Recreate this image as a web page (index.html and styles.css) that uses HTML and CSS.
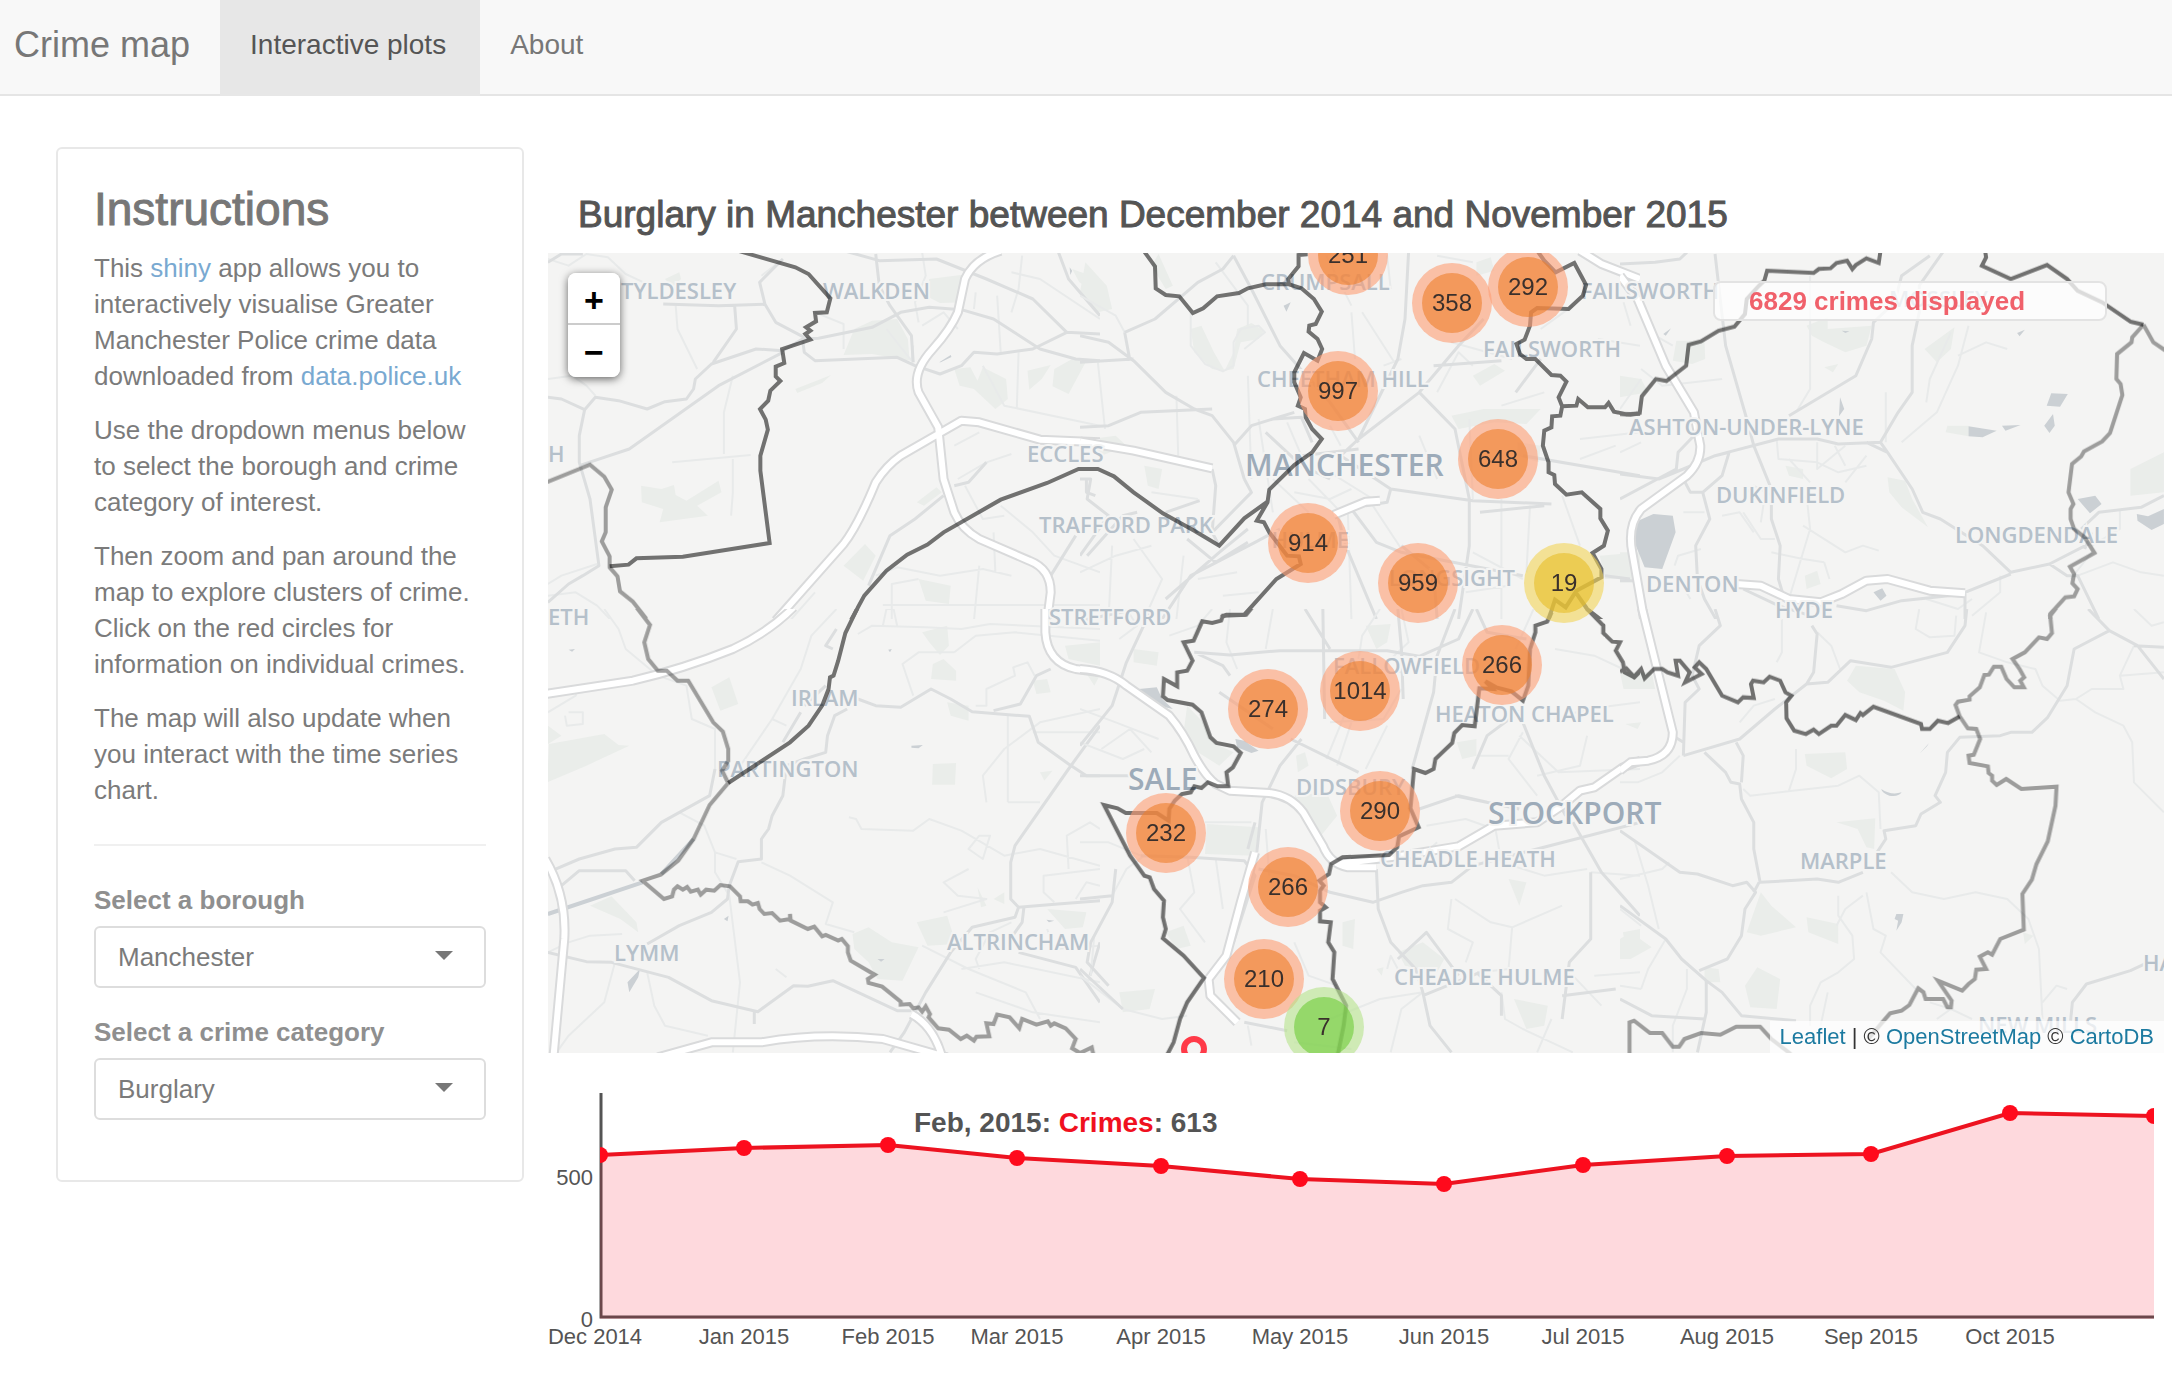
FILE: index.html
```html
<!DOCTYPE html>
<html lang="en">
<head>
<meta charset="utf-8">
<meta name="viewport" content="width=device-width, initial-scale=1">
<title>Crime map</title>
<link rel="stylesheet" href="styles.css">
</head>
<body>
<nav class="navbar">
  <a class="brand" href="#">Crime map</a>
  <a class="nav-item active" href="#plots">Interactive plots</a>
  <a class="nav-item" href="#about">About</a>
</nav>
<main class="layout">
  <aside class="sidebar">
    <h3>Instructions</h3>
    <p>This <a href="#shiny">shiny</a> app allows you to interactively visualise Greater Manchester Police crime data downloaded from <a href="#data">data.police.uk</a></p>
    <p>Use the dropdown menus below to select the borough and crime category of interest.</p>
    <p>Then zoom and pan around the map to explore clusters of crime. Click on the red circles for information on individual crimes.</p>
    <p>The map will also update when you interact with the time series chart.</p>
    <hr>
    <div class="field">
      <label for="borough">Select a borough</label>
      <div class="select-wrap"><select id="borough"><option>Manchester</option></select></div>
    </div>
    <div class="field">
      <label for="category">Select a crime category</label>
      <div class="select-wrap"><select id="category"><option>Burglary</option></select></div>
    </div>
  </aside>
  <section class="content">
    <h4>Burglary in Manchester between December 2014 and November 2015</h4>
    <div class="map">
      <svg class="basemap" viewBox="548 254 1616 800" preserveAspectRatio="xMidYMid slice" aria-label="Map of Greater Manchester">
        <!-- parks and water -->
        <svg class="tile" x="540" y="180" width="560" height="440" viewBox="0 0 1568 1320" preserveAspectRatio="none">
          <path class="park" d="M283 920L340 930 375 918 380 948 410 965 500 905 508 940 440 980 470 1010 335 1030 345 990 285 970ZM880 450L930 425 1000 420 1030 480 1035 545 930 525 850 528ZM1090 300L1200 285 1190 370 1120 372 1080 350ZM1160 570L1205 565 1225 605 1240 565 1305 600 1310 660 1275 690 1215 630 1175 620ZM1365 575L1430 558 1405 600 1370 632ZM1440 570L1490 540 1530 545 1480 645 1435 622ZM1060 1200L1150 1220 1145 1275 1080 1265ZM850 1160L910 1095 940 1130 905 1205ZM1055 970L1110 925 1125 940 1075 980ZM1490 270L1568 300 1568 350 1510 310ZM715 630L815 588 790 612 720 642ZM350 300L390 280 395 300 370 325Z"/>
          <path class="water" d="M1483 265L1490 275 1485 288ZM1118 550L1150 528 1152 534 1122 550Z"/>
        </svg>
        <svg class="tile" x="1080" y="180" width="560" height="440" viewBox="0 0 1568 1320" preserveAspectRatio="none">
          <path class="park" d="M310 450L340 440 375 520 405 575 370 570 320 520ZM440 450L480 432 515 455 500 480 450 490 430 570 405 575 430 520ZM15 250L75 320 90 390 50 400 0 340ZM1040 710L1130 690 1290 690 1250 735 1160 730 1060 750ZM1100 590L1160 555 1190 575 1120 620ZM1225 790L1290 800 1285 850 1225 830ZM1455 1130L1568 1120 1568 1200 1470 1200ZM220 225L260 320 240 330 200 260ZM30 780L100 770 130 800 60 830ZM180 860L230 870 220 930 190 920ZM1110 250L1150 235 1160 275 1110 290Z"/>
          <path class="water" d="M570 380L590 370 578 398ZM1555 1060L1568 1050V1110Z"/>
        </svg>
        <svg class="tile" x="1620" y="180" width="552" height="440" viewBox="0 0 1568 1320" preserveAspectRatio="none">
          <path class="park" d="M160 485L240 485 242 540 205 555 150 545ZM530 440L590 415 590 450 715 440 700 500 640 520 580 490 545 470ZM865 510L950 445 940 510 900 550ZM0 590L60 600 80 640 0 655ZM760 895L810 905 830 960 875 1045 800 985 765 940ZM1450 870L1545 820 1545 940 1450 950ZM470 860L520 870 520 900 480 890ZM525 1190L560 1175 570 1215 530 1230ZM580 565L620 555 605 580ZM930 740L990 740 990 772 925 760ZM0 1120L40 1120 50 1210 0 1210Z"/>
          <path class="water" d="M42 1030L95 1005 150 1010 158 1060 120 1170 70 1165 45 1100ZM1225 643L1272 645 1250 683 1212 680ZM990 742L1070 755 1030 775 990 772ZM1085 740L1138 738 1095 755ZM1230 705L1235 740 1220 762 1205 740ZM1300 960L1350 950 1368 975 1335 1003ZM1468 1005L1500 1012 1545 990 1545 1035 1510 1053 1470 1025ZM720 1240L745 1228 757 1250 740 1265ZM625 655L637 690 622 712ZM1128 462L1150 452 1135 472ZM630 455L652 457 640 462ZM123 465L145 448 130 470Z"/>
        </svg>
        <svg class="tile" x="540" y="610" width="560" height="450" viewBox="0 0 1568 1350" preserveAspectRatio="none">
          <path class="park" d="M25 405L180 375 220 408 250 410 130 470 20 520ZM22 350L60 380 22 405ZM480 235L530 205 555 285 505 305ZM1070 70L1140 50 1145 110 1120 138 1090 100ZM1100 165L1130 150 1165 185 1165 215 1095 210ZM1380 215L1420 210 1430 250 1390 255ZM1470 110L1568 100V170L1480 150ZM1100 465L1165 462 1162 527 1098 527ZM1055 940L1140 920 1165 1005 1085 1010ZM875 975L920 955 985 1000 1060 1015 1015 1115 945 1110 920 1060 880 1020ZM140 890L200 862 270 940 275 970 225 930ZM1420 900L1530 910 1520 955 1470 960ZM1225 835L1250 890 1235 895ZM1270 870L1300 850 1300 885ZM1140 280L1200 290 1200 335 1150 320ZM1400 490L1435 485 1412 515Z"/>
          <path class="water" d="M1040 410L1072 408 1060 418 1040 416ZM80 122L98 120 90 128ZM515 930L528 920 525 937ZM245 1120L280 1080 275 1105 250 1150ZM1418 932L1440 935 1425 940ZM945 1050L965 1050 955 1058ZM975 122L985 120 980 130Z"/>
        </svg>
        <svg class="tile" x="1080" y="610" width="560" height="450" viewBox="0 0 1568 1350" preserveAspectRatio="none">
          <path class="park" d="M355 645L500 655 490 740 350 735ZM300 290L345 340 370 400 430 430 390 470 330 430 290 370ZM600 560L690 550 720 620 660 700 620 600ZM110 1150L210 1140 195 1200 120 1210ZM890 1030L960 1000 1020 1050 1000 1090 910 1070ZM1215 1170L1310 1190 1300 1250 1250 1260ZM735 940L770 930 765 1020 735 1010ZM1200 810L1250 820 1230 890ZM605 440L630 430 640 470 610 490ZM1055 400L1110 390 1110 440 1070 450ZM240 970L290 950 310 1010 270 1020ZM800 50L870 45 860 100 830 120ZM1520 970L1568 960V1030L1530 1020ZM150 120L220 130 215 170 150 160ZM10 180L60 190 40 230ZM1210 1240L1225 1260ZM830 1080L850 1075 845 1100Z"/>
          <path class="water" d="M165 240L215 235 230 270 260 300 220 290 180 270ZM435 390L460 395 500 425 480 432 440 415Z"/>
        </svg>
        <svg class="tile" x="1620" y="610" width="552" height="450" viewBox="0 0 1568 1350" preserveAspectRatio="none">
          <path class="park" d="M670 170L780 180 810 250 805 305 750 275 680 250 645 215ZM525 435L640 430 645 480 600 508 530 470ZM615 640L725 628 722 720 700 715 675 660ZM400 850L430 890 500 955 400 980 360 970ZM530 925L620 945 620 1005 535 970ZM390 1075L455 1110 445 1200 370 1195 355 1130ZM0 990L30 970 90 1015 30 1050 0 1050ZM0 190L90 190 100 240 10 240ZM240 1075L280 1080 285 1120 240 1120ZM1145 970L1175 980 1150 1005ZM15 345L60 340 50 360Z"/>
          <path class="water" d="M742 540Q770 560 800 550 790 565 765 560 745 552 742 540ZM785 915L805 915 800 940 785 965 790 935 780 930ZM850 435L878 402 872 412Z"/>
        </svg>
        <!-- roads, rivers -->
        <svg class="tile" x="540" y="180" width="560" height="440" viewBox="0 0 1568 1320" preserveAspectRatio="none">
          <path class="minor" d="M22 240L80 260 130 225 190 235 240 285 290 310M22 600L90 590 130 620 155 650M22 1250L100 1240 160 1280 200 1325M380 380L385 450 440 570M540 590L515 700 515 825M370 850L590 828M540 840L540 940 535 1010M1070 220L1080 290 1050 370 1060 430M1070 440L1130 400 1170 450M1220 340L1215 390M1280 350L1290 520M1340 520L1335 690M1240 560L1300 680 1568 740M1160 800L1230 760M1170 900L1250 850 1320 825M940 1190L1000 1165 1120 1190 1240 1170 1320 1190M985 1325L985 1215 1060 1200M1230 1160L1215 1325M1270 1060L1275 1180M1290 980L1380 1060 1440 1130 1568 1180M1190 920L1240 1020 1300 1010M22 1215L60 1190 160 1155M770 400L850 435 850 510M970 450L1040 545 1045 500M1320 280L1400 300 1568 420M620 290L680 240M700 1325L770 1240M960 1278L1568 1278M1350 230L1340 330 1320 400"/>
          <path class="road" d="M22 655L60 660 125 692 155 655 220 665 300 690 350 668 410 660 430 630 435 600 480 555 605 510 680 515 735 480 780 478 930 445 1010 400 1090 385 1180 392 1270 420 1400 510 1500 540 1568 545M125 692L110 770 110 850 140 960 165 1160 120 1190 80 1215 22 1270M110 860L250 810 500 620 680 520M345 375L500 380 630 376 660 430 740 475M630 376L615 310 680 240M545 380L550 450 485 550M735 480L740 520 770 545 1000 535 1050 560 1120 585 1180 560 1215 520 1280 525 1380 510 1475 460 1568 465M940 225L950 320 980 380 1040 470 1045 550M850 215L950 245 1110 240 1250 300 1380 360 1475 460M1450 215L1480 300 1568 410M1160 920L1200 910 1250 850M920 1220L980 1070 1050 1020 1130 950M1430 1190L1500 1070M1530 900L1530 940 1555 950M22 250L60 225 120 225"/>
          <path class="mway-case" d="M1290 215Q1215 240 1190 300L1170 400Q1150 450 1100 510Q1040 580 1060 640L1115 745 1130 900 1160 1000Q1180 1050 1230 1080L1370 1145Q1430 1170 1430 1240L1420 1325M660 1325L850 1095Q890 1040 940 910Q970 860 1010 830L1115 765 1180 725 1230 730 1400 782 1570 790"/>
          <path class="mway" d="M1290 215Q1215 240 1190 300L1170 400Q1150 450 1100 510Q1040 580 1060 640L1115 745 1130 900 1160 1000Q1180 1050 1230 1080L1370 1145Q1430 1170 1430 1240L1420 1325M660 1325L850 1095Q890 1040 940 910Q970 860 1010 830L1115 765 1180 725 1230 730 1400 782 1570 790"/>
        </svg>
        <svg class="tile" x="1080" y="180" width="560" height="440" viewBox="0 0 1568 1320" preserveAspectRatio="none">
          <path class="minor" d="M0 350L100 410 125 460M310 400L310 500 350 555 400 577 430 560 430 490 450 450 500 440 518 460 460 510M50 550L70 750M270 650L275 830M470 590L480 900M380 250L470 380 470 440M760 400L770 540M790 400L880 550M850 560L900 540M1000 640L1060 520 1100 560M1040 490L1210 540M1290 450L1380 380M1180 680L1300 640M950 770L1000 900M1090 720L1100 960M1180 960L1180 1320M1260 980L1250 1180M1350 950L1400 1100M750 1000L760 1320M820 980L900 1110M600 940L700 960 760 930M640 900L740 1010M700 880L820 960M540 900L640 1000M500 720L540 1000M580 730L620 830M700 740L730 800M90 1100L80 1320M150 1080L230 1200 180 1320M290 1130L270 1320M330 1200L440 1180M0 1180L100 1130 200 1100M200 940L330 960M1100 1120L1240 1200M1080 1240L1200 1220M1400 780L1568 760M1400 840L1500 800M1450 480L1568 500M860 230L870 330M1000 230L1100 250M690 230L760 380M400 1250L500 1240"/>
          <path class="road" d="M0 470L80 490 150 545 240 640 320 690 370 710 430 790 460 900M0 550L150 540M125 460L140 545M125 460L210 420 330 310 400 270 430 230M430 230L480 330 560 500 700 670 780 790M920 220L910 420 890 540 780 780 730 830M1130 420L1060 500 950 640 780 780M950 640L1050 750 1090 960 1090 1100 1060 1320M730 830L870 930 1100 965 1320 975M870 930L860 970 800 980M0 745L80 740 170 700 370 690M460 900L480 940 370 1060 390 1100M0 900L30 900 20 960 80 1010 0 1130M370 870L380 920 370 1060M20 1130L120 1010 160 1000M240 1000L335 965M230 1320L310 1190 490 1090 560 1050M240 1260L390 1120 470 1050M760 990L830 1090 900 1120 1240 1190M720 1000L740 1090 830 1320M1240 830L1568 890M990 560L1180 545M1290 540L1220 640M900 1100L990 1180 1000 1320M620 830L780 810M520 760L620 860 700 900M540 720L620 715 650 790M1120 1000L1300 980M1540 1200L1470 1190M1410 220L1568 320M300 1080L380 1150 470 1090M600 700L480 740 430 800"/>
          <path class="mway-case" d="M0 787L150 815 370 868M710 1008L800 968 840 965M1400 215L1460 255 1568 300"/>
          <path class="mway" d="M0 787L150 815 370 868M710 1008L800 968 840 965M1400 215L1460 255 1568 300"/>
        </svg>
        <svg class="tile" x="1620" y="180" width="552" height="440" viewBox="0 0 1568 1320" preserveAspectRatio="none">
          <path class="minor" d="M70 380L100 470 150 500M60 570L120 620 290 600M540 290L540 630 500 700M755 640L755 790M960 530L1040 490 1100 510M990 440L960 560 900 700 800 790M940 460L880 600 870 670M445 780L450 840 560 850 620 880 700 860M560 790L560 870 640 800M610 800L640 860M350 950L380 920 450 960 560 950M350 1000L400 1080 440 1080M430 1120L520 1140 580 1150M520 1040L640 1120 690 1100 735 1115M410 960L400 1030M580 1150L595 1200M155 1160L165 1130 230 1110M290 1010L340 1000 380 1060M530 950L540 1050 480 1260M160 1190L200 1260M870 1260L960 1290 1000 1260M1300 1190L1400 1150 1480 1180 1545 1190M1080 1190L1080 1240 1000 1310M1340 1120L1280 1200M10 370L30 440M60 600L0 690M180 1000L240 1000M480 840L540 910M700 830L640 910M0 820L60 790M1420 990L1420 1050 1340 1100"/>
          <path class="road" d="M0 255L100 250 170 240 190 220M270 225L300 500 360 720 380 800 430 930 430 1020 455 1100 450 1200 470 1270M0 885L110 900 180 870 270 830 450 780 560 780 620 795 740 790 790 700 830 640 830 500 850 400 850 320 920 215M480 710L670 590 715 480 720 430 780 370 800 290 880 230M0 960L160 870 165 820 210 770 230 820M270 830L310 820 290 890 235 940 200 940 180 900M235 940L255 1020 215 1100 220 1200 240 1260 275 1325M700 790L760 820 830 930 860 1000 910 1020 1030 1100 1110 1180 1220 1155 1340 1090M1110 1185L980 1240 980 1320M1220 1155L1270 1190 1300 1190 1360 1320M1310 1050L1360 1000 1480 985 1545 950M615 1280L700 1295 800 1265 980 1245M740 790L760 820M0 1205L40 1205M1340 1060L1320 1110M350 1230L450 1280 540 1310"/>
          <path class="mway-case" d="M0 290L50 360 130 560 210 700 228 800Q230 850 190 890L60 990Q20 1040 35 1120L70 1330M330 1215L400 1220 480 1260 570 1270 630 1245 700 1205 760 1200 880 1235 980 1243"/>
          <path class="mway" d="M0 290L50 360 130 560 210 700 228 800Q230 850 190 890L60 990Q20 1040 35 1120L70 1330M330 1215L400 1220 480 1260 570 1270 630 1245 700 1205 760 1200 880 1235 980 1243"/>
        </svg>
        <svg class="tile" x="540" y="610" width="560" height="450" viewBox="0 0 1568 1350" preserveAspectRatio="none">
          <path class="minor" d="M180 0L220 60 240 120 330 200 410 230 425 330 490 360 490 480M830 0L760 80 730 180 650 330 580 440 530 520M650 330L690 350M890 75L930 50 1080 55 1180 60 1260 45 1568 60M960 50L970 0 990 0 1000 50M1160 130L1060 130 1015 165 1045 260M1160 130L1220 80 1330 70 1568 95M1220 290L1250 290 1250 240 1330 200 1325 175 1365 160 1385 200M865 625L885 630 900 660 1045 665 1090 630 1180 665 1300 740 1400 720 1568 770M1310 320L1310 580M1250 580L1240 500 1300 420 1400 340 1568 300M1310 580L1400 580M1380 370L1568 370M1230 680L1200 720 1240 750 1260 680ZM1200 780L1130 820 1170 860 1250 870 1130 910M1480 780L1475 680 1540 640 1568 660M620 760L700 800 820 880 800 945 880 970M390 610L460 650 490 730 550 750M490 730L490 790 530 860 560 1120 540 1330M300 1090L320 1190 350 1250 470 1280M210 1060L180 1180 80 1280 40 1340M22 1030L80 1000 140 980 230 975M1070 1010L1200 1080 1360 1150 1400 1230M1230 1080L1220 1050 1260 970 1320 940M1180 1080L1300 1060 1568 1120M1220 1150L1380 1210 1568 1240M22 310L100 260 105 240M80 310L120 310 120 345 75 350 70 320M660 1080L690 1105M1440 880L1410 850 1410 800 1568 780M1500 870L1530 820 1568 830M1420 960L1440 1020 1568 1010"/>
          <path class="road" d="M890 270L940 290 1010 295 1095 240 1150 270 1210 308 1370 322 1395 400 1480 465 1530 500 1568 500M1270 305L1345 285 1390 200 1430 180M1568 350L1480 480 1330 710 1318 760 1318 870 1340 895 1450 885 1568 875M1340 895L1330 925 1210 955 1150 1030 1080 1150 1020 1270 980 1330M1355 895L1350 940 1320 985M1340 1030L1500 1075 1568 1180M1568 1000L1540 1100M860 300L825 320 805 380 800 430 740 450 690 470 680 560 650 620 640 660 620 690 620 750 555 758 530 830 525 870 480 910 390 950 300 1005M490 480L475 560 340 640 270 715 210 720 110 750 22 790M60 830L110 785 240 785 265 815M22 1030L130 1058 200 1060 360 1105 480 1175 610 1208 710 1130 750 1132 820 1115 1000 1205 1040 1205M730 310L680 400M830 60L800 110 820 120M800 230L740 290M600 1205L600 1245"/>
          <path class="river" d="M22 915L287 820M340 795L430 690"/>
          <path class="mway-case" d="M710 -5Q640 70 540 120Q400 180 260 215L15 255M15 750Q75 860 68 990L38 1340M330 1345L480 1300 620 1300Q780 1270 960 1290L1140 1345M1040 1215Q1100 1250 1125 1340M1415 -5L1415 70Q1420 160 1500 180L1570 190"/>
          <path class="mway" d="M710 -5Q640 70 540 120Q400 180 260 215L15 255M15 750Q75 860 68 990L38 1340M330 1345L480 1300 620 1300Q780 1270 960 1290L1140 1345M1040 1215Q1100 1250 1125 1340M1415 -5L1415 70Q1420 160 1500 180L1570 190"/>
        </svg>
        <svg class="tile" x="1080" y="610" width="560" height="450" viewBox="0 0 1568 1350" preserveAspectRatio="none">
          <path class="minor" d="M0 300L100 340 220 390M60 420L140 360 200 430M0 400L120 450 180 420M420 0L410 100 440 180M540 0L520 120M840 0L790 80 780 150M790 190L820 180 900 190M700 340L850 330 900 240M740 320L690 450M760 340L720 470M860 350L800 480M480 640L350 640M300 740L320 850 280 900 350 1000M520 660L530 800M380 750L400 900M90 860L130 780 180 740M0 1100L120 1200 230 1230 300 1220M40 980L30 1100M600 1000L640 1100 720 1130M1040 870L1030 960 1100 1000 1080 1060M1050 870L1150 940 1210 955 1350 890M1210 955L1200 1080 1120 1090M1160 640L1180 760 1300 800 1420 780M970 650L1080 630 1160 660M940 760L1000 700M1430 790L1568 800M1240 370L1200 450 1280 560M1420 380L1400 470 1280 500M1120 440L1200 440M960 1150L900 1200 870 1330M1180 1150L1190 1230 1240 1260 1380 1330M1320 1230L1280 1330M1440 1100L1568 1090M1380 1100L1460 1190M860 1080L870 1040 890 1080M700 1230L840 1170 960 1150M470 1250L480 1310M600 1300L760 1320M370 0L330 50 250 80M130 0L160 50 110 90M900 0L920 100 870 150M1270 0L1220 120M1330 330L1420 300 1568 280M1330 120L1440 140 1520 180M1230 380L1340 490 1568 480M0 700L80 700 170 740"/>
          <path class="road" d="M0 35L160 0M200 0L130 160 90 290 0 410M680 0L685 330M890 0L900 120 905 270M320 130L420 138 560 125 860 125 950 142 1060 90 1100 0M1050 0L1000 140 990 250 930 480M330 135L400 170 420 200M590 390L780 490M620 390L560 470 510 580 495 730M0 500L140 500M170 740L310 745 460 755 490 800 430 1000 370 1100M500 780L600 800 700 850 820 880 900 850 960 830 1040 820 1100 770 1568 640M830 780L835 900 870 1000 940 1080 960 1150 980 1250 1040 1330M1240 340L1300 500 1360 620M950 600L1060 560 1140 580M1100 480L1140 380 1240 300M1430 790L1430 990 1370 1060 1350 1230M1380 640L1460 790 1568 920M1110 1090L1180 1160 1180 1220M960 1160L1120 1090M890 1050L970 970 1060 1100M470 720L490 640M100 780L90 880 30 1000 20 1060 80 1130M0 870L90 860M1110 0L1140 70 1250 90M630 0L700 120M0 1080L120 1200M460 1240L580 1265M1050 560L1230 600M1500 1140L1350 1160M390 250L540 360"/>
          <path class="mway-case" d="M0 180Q80 185 130 230L250 320Q290 370 320 440Q350 500 380 525L420 545 530 552Q590 560 625 610L680 710Q700 765 750 775L830 775M490 730L450 880 410 1040 360 1110 365 1160 440 1240M720 765L900 740 1060 712 1160 650 1280 640 1350 590 1400 545 1440 535 1520 475 1570 455"/>
          <path class="mway" d="M0 180Q80 185 130 230L250 320Q290 370 320 440Q350 500 380 525L420 545 530 552Q590 560 625 610L680 710Q700 765 750 775L830 775M490 730L450 880 410 1040 360 1110 365 1160 440 1240M720 765L900 740 1060 712 1160 650 1280 640 1350 590 1400 545 1440 535 1520 475 1570 455"/>
        </svg>
        <svg class="tile" x="1620" y="610" width="552" height="450" viewBox="0 0 1568 1350" preserveAspectRatio="none">
          <path class="minor" d="M460 30L460 130 445 160M560 70L600 110 625 180M850 0L840 60 880 85 950 80 955 20M1040 10L1020 130 1100 160 1180 180 1200 230 1250 275 1295 270 1350 310 1430 350 1455 400 1460 520 1545 610M1295 270L1340 240 1430 240 1420 200 1460 110M1460 0L1510 50 1545 40M350 540L370 560 490 545 620 530 680 500 735 550 740 660M500 420L500 480 480 545M340 340L380 290 440 270M770 790L830 850 920 870 1010 850 1100 870 1160 930 1190 1020 1200 1230M700 850L720 960 755 980 740 1030 840 1140M620 860L620 920 660 980 665 1050 620 1090 570 1120 540 1190 540 1250M590 1150L570 1250M0 520L50 520 120 490 170 440M40 690L80 830 110 960M0 810L120 780 140 760M0 900L60 950M130 990L80 1080 60 1140M190 1080L190 1140 150 1250 150 1330M1200 1180L1240 1130 1270 1140M900 1230L940 1200 1000 1230M0 1130L60 1140M690 860L640 900 615 950M1420 200L1545 190M880 1180L940 1200"/>
          <path class="road" d="M270 0L285 50 225 110 205 200 225 240 185 280 180 440M545 50L560 75 550 190 530 225 590 220 655 155 770 175 930 130 980 50 985 0M530 225L440 300 340 390 180 440M240 430L300 490 315 520 340 525 345 570 380 640 380 720 398 820 560 810 620 820 690 790M330 400L350 440 345 520M0 665L170 790 220 795 320 830 360 820 385 850 355 900 345 980 305 1050 225 1085M0 890L130 990 175 1050 245 1115 290 1150 345 1220 500 1235M245 1115L245 1210 220 1330M0 1170L90 1220 240 1230M730 730L755 690 750 665 840 650 855 615 910 580 895 560 925 490 930 430 965 385 1080 380 1110 370 1170 370 1215 325 1270 230 1290 120 1390 65 1330 0M1390 65L1470 110 1545 210M1460 110L1545 115M1280 1235L1285 1180 1325 1125 1450 1085 1500 1060M395 820L380 850M150 380L180 400"/>
          <path class="mway-case" d="M62 -5L150 370Q150 440 80 455L30 460 0 485"/>
          <path class="mway" d="M62 -5L150 370Q150 440 80 455L30 460 0 485"/>
        </svg>
        <!-- place names -->
        <g class="places">
          <text x="621" y="300">TYLDESLEY</text>
          <text x="823" y="300">WALKDEN</text>
          <text x="548" y="463">H</text>
          <text x="1027" y="463">ECCLES</text>
          <text x="1039" y="534">TRAFFORD PARK</text>
          <text x="1049" y="626">STRETFORD</text>
          <text x="1261" y="291">CRUMPSALL</text>
          <text x="1719" y="300" class="end">FAILSWORTH</text>
          <text x="1483" y="358">FAILSWORTH</text>
          <text x="1257" y="388">CHEETHAM HILL</text>
          <text x="1349" y="549" class="end">HULME</text>
          <text x="1515" y="587" class="end">LONGSIGHT</text>
          <text x="1629" y="436">ASHTON-UNDER-LYNE</text>
          <text x="1716" y="504">DUKINFIELD</text>
          <text x="1955" y="544">LONGDENDALE</text>
          <text x="1646" y="593">DENTON</text>
          <text x="1775" y="619">HYDE</text>
          <text x="1889" y="308">MOSSLEY</text>
          <text x="548" y="626">ETH</text>
          <text x="791" y="707">IRLAM</text>
          <text x="717" y="778">PARTINGTON</text>
          <text x="614" y="962">LYMM</text>
          <text x="947" y="951">ALTRINCHAM</text>
          <text x="1333" y="675">FALLOWFIELD</text>
          <text x="1435" y="723">HEATON CHAPEL</text>
          <text x="1296" y="796">DIDSBURY</text>
          <text x="1380" y="868">CHEADLE HEATH</text>
          <text x="1394" y="986">CHEADLE HULME</text>
          <text x="1800" y="870">MARPLE</text>
          <text x="2143" y="972">HAYFIELD</text>
          <text x="1978" y="1034">NEW MILLS</text>
          <text class="city" x="1245" y="477">MANCHESTER</text>
          <text class="city" x="1128" y="791">SALE</text>
          <text class="city" x="1488" y="825">STOCKPORT</text>
        </g>
        <!-- county boundary -->
        <g class="boundary outer">
          <svg class="tile" x="540" y="180" width="560" height="440" viewBox="0 0 1568 1320" preserveAspectRatio="none">
            <path d="M18 910L140 857 180 893 201 932 184 985 184 1060 173 1087 195 1132 195 1165 217 1192 224 1237 260 1268 298 1320"/>
          </svg>
          <svg class="tile" x="1620" y="180" width="552" height="440" viewBox="0 0 1568 1320" preserveAspectRatio="none">
            <path d="M1487 437L1515 490 1550 515M1487 437L1455 475 1453 490 1412 525 1410 600 1422 615 1427 648 1392 762 1370 787 1318 817 1310 832 1284 855 1274 940 1288 975 1280 990 1280 1020 1290 1050 1320 1075 1348 1122 1278 1163 1290 1185 1285 1213 1300 1230 1290 1252 1265 1255 1222 1305 1222 1325"/>
          </svg>
          <svg class="tile" x="540" y="610" width="560" height="450" viewBox="0 0 1568 1350" preserveAspectRatio="none">
            <path d="M270 -5L308 48 292 100 303 150 330 185 355 185 385 215 415 215 485 340 512 368 527 420 527 455 510 485 527 522 475 588 430 690 387 755 338 797 287 815 347 870 370 862 375 842 385 832 400 842 412 834 422 848 442 842 450 857 465 842 488 845 505 828 532 832 560 862 562 877 582 877 595 887 610 882 615 900 628 915 650 912 672 935 700 930 700 915 702 935 750 960 768 953 790 982 800 978 835 995 845 990 862 1012 862 1030 870 1055 937 1097 918 1110 920 1122 958 1133 1010 1178 1010 1187 1035 1185 1045 1198 1060 1195 1070 1208 1080 1192 1092 1215 1088 1225 1115 1258 1145 1262 1178 1290 1195 1280 1215 1295 1222 1283 1258 1282 1250 1243 1270 1245 1280 1217 1315 1225 1342 1258 1350 1230 1390 1247 1422 1237 1430 1250 1440 1243 1472 1258 1500 1290 1490 1318 1512 1332 1545 1315 1550 1340"/>
          </svg>
          <svg class="tile" x="1620" y="610" width="552" height="450" viewBox="0 0 1568 1350" preserveAspectRatio="none">
            <path d="M1240 -5L1222 20 1227 72 1213 90 1190 85 1150 130 1115 150 1135 180 1148 205 1137 215 1147 235 1120 235 1098 210 1083 173 1062 173 1048 197 1035 198 1022 235 993 262 993 272 960 278 953 288 965 322 988 358 1012 360 1023 390 1005 437 990 440 993 462 1045 472 1047 492 1057 500 1057 515 1070 528 1097 510 1140 540 1240 533 1237 590 1215 697 1183 765 1170 812 1143 855 1147 962 1080 990 1057 1037 1045 1030 1022 1043 1040 1080 1012 1082 1008 1110 990 1125 972 1145 903 1115 942 1175 940 1195 930 1195 918 1170 868 1170 862 1150 847 1138 822 1188 800 1205 767 1213 745 1240 705 1290M27 1340L27 1240 40 1235 85 1272 120 1272 150 1313 168 1313 183 1290 230 1272 285 1277 330 1253 398 1253 430 1290 485 1335"/>
          </svg>
        </g>
        <!-- borough boundaries -->
        <g class="boundary inner">
          <svg class="tile" x="540" y="180" width="560" height="440" viewBox="0 0 1568 1320" preserveAspectRatio="none">
            <path d="M553 215L715 265 752 285 813 358 803 400 770 402 773 427 745 445 757 455 743 465 757 482 678 510 684 552 660 563 660 592 673 606 645 635 639 665 616 690 632 722 638 752 617 830 617 875 643 1092 400 1133 270 1138 248 1157 195 1162M870 1325L908 1250 970 1175 1028 1127 1085 1097 1130 1060 1290 962 1420 912 1508 870 1515 870"/>
          </svg>
          <svg class="tile" x="1080" y="180" width="560" height="440" viewBox="0 0 1568 1320" preserveAspectRatio="none">
            <path d="M178 215L210 262 212 328 240 348 278 352 316 402 345 388 384 352 445 342 470 328 520 316 585 316 620 328 655 360 677 398 660 435 642 440 640 458 665 480 678 510 665 545 627 522 600 580 600 610 618 655 610 680 630 690 632 715 650 750 677 780 650 820 600 858 530 932 525 970 495 1025 515 1030 530 1060 580 1130 613 1132 618 1155 550 1200 460 1307 410 1307 395 1315M585 316L583 300 612 262 612 228 632 226 632 215M-8 870L50 870 95 892 150 940 232 1003 320 1055 390 1100 460 1018 525 968M1280 215L1300 245 1332 280 1384 252 1417 318 1408 350 1368 390 1280 387 1263 400 1260 440 1245 482 1222 495 1232 525 1250 540 1275 540 1320 588 1345 590 1362 608 1340 655 1350 682 1345 710 1322 712 1320 745 1300 755 1296 800 1312 850 1312 880 1328 888 1330 915 1362 947 1405 940 1457 990 1457 1018 1478 1055 1467 1100 1435 1122 1460 1170 1460 1195 1390 1235 1360 1285 1330 1262 1310 1328M1350 682L1390 680 1395 660 1422 685 1470 685 1480 672 1495 698 1530 706 1568 704M1388 1240L1420 1290 1462 1325"/>
          </svg>
          <svg class="tile" x="1620" y="180" width="552" height="440" viewBox="0 0 1568 1320" preserveAspectRatio="none">
            <path d="M0 705L30 707 56 702 62 652 102 600 132 606 188 560 195 497 230 487 280 455 325 443 355 405 360 360 395 320 410 305 418 275 550 282 565 270 598 268 615 252 645 245 660 270 670 258 700 238 735 252 740 215M1037 215L1040 235 1028 260 1110 300 1213 258 1270 300 1300 335 1370 370 1450 428 1487 437"/>
          </svg>
          <svg class="tile" x="540" y="610" width="560" height="450" viewBox="0 0 1568 1350" preserveAspectRatio="none">
            <path d="M890 -5L855 72 835 155 822 200 812 205 808 240 790 290 752 350 700 400 527 522"/>
          </svg>
          <svg class="tile" x="1080" y="610" width="560" height="450" viewBox="0 0 1568 1350" preserveAspectRatio="none">
            <path d="M482 -5L465 17 400 20 395 35 370 42 342 37 318 95 290 100 315 155 300 185 272 190 272 232 235 210 232 262 245 273 315 287 340 310 365 385 382 402 430 412 450 432 428 475 410 490 415 532 385 532 358 520 340 537 320 532 310 550 285 555 265 575 250 600 248 635 215 612 128 612 105 598 67 588 140 740 180 800 195 805 207 840 235 875 232 925 240 960 232 988 290 1040 347 1107 300 1180 280 1230 262 1300 245 1335M1320 10L1308 38 1275 50 1275 70 1260 120 1255 230 1240 275 1208 247 1165 235 1135 217 1155 240 1118 238 1105 352 1070 348 1048 372 1042 402 995 450 990 480 967 492 935 480 925 598 948 655 893 682 888 715 865 738 735 745 703 765 697 795 670 815 682 830 672 845 672 880 688 895 672 905 672 937 702 940 695 1000 712 1030 707 1110 745 1190 738 1250 722 1335M1420 0L1465 50 1465 72 1490 98 1512 100 1500 125 1520 160 1525 190 1552 205 1568 188"/>
          </svg>
          <svg class="tile" x="1620" y="610" width="552" height="450" viewBox="0 0 1568 1350" preserveAspectRatio="none">
            <path d="M0 188L18 178 40 203 60 180 70 208 97 180 120 180 135 190 165 200 158 155 170 155 198 190 185 220 232 195 212 175 225 160 245 180 290 260 335 280 350 265 380 267 372 225 378 215 408 220 425 203 455 215 470 250 487 260 472 280 473 328 495 365 528 375 550 362 565 375 600 350 615 350 640 318 670 333 683 312 690 318 720 293 855 345 858 360 880 360 903 335 932 342 965 322"/>
          </svg>
        </g>
        <circle class="crime" cx="1194" cy="1050" r="10"/>
        <!-- clusters -->
        <g class="cluster large"><circle cx="1348" cy="256" r="40"/><circle cx="1348" cy="256" r="30"/><text x="1348" y="264">251</text></g>
        <g class="cluster large"><circle cx="1452" cy="304" r="40"/><circle cx="1452" cy="304" r="30"/><text x="1452" y="312">358</text></g>
        <g class="cluster large"><circle cx="1528" cy="288" r="40"/><circle cx="1528" cy="288" r="30"/><text x="1528" y="296">292</text></g>
        <g class="cluster large"><circle cx="1338" cy="392" r="40"/><circle cx="1338" cy="392" r="30"/><text x="1338" y="400">997</text></g>
        <g class="cluster large"><circle cx="1498" cy="460" r="40"/><circle cx="1498" cy="460" r="30"/><text x="1498" y="468">648</text></g>
        <g class="cluster large"><circle cx="1308" cy="544" r="40"/><circle cx="1308" cy="544" r="30"/><text x="1308" y="552">914</text></g>
        <g class="cluster large"><circle cx="1418" cy="584" r="40"/><circle cx="1418" cy="584" r="30"/><text x="1418" y="592">959</text></g>
        <g class="cluster medium"><circle cx="1564" cy="584" r="40"/><circle cx="1564" cy="584" r="30"/><text x="1564" y="592">19</text></g>
        <g class="cluster large"><circle cx="1502" cy="666" r="40"/><circle cx="1502" cy="666" r="30"/><text x="1502" y="674">266</text></g>
        <g class="cluster large"><circle cx="1360" cy="692" r="40"/><circle cx="1360" cy="692" r="30"/><text x="1360" y="700">1014</text></g>
        <g class="cluster large"><circle cx="1268" cy="710" r="40"/><circle cx="1268" cy="710" r="30"/><text x="1268" y="718">274</text></g>
        <g class="cluster large"><circle cx="1380" cy="812" r="40"/><circle cx="1380" cy="812" r="30"/><text x="1380" y="820">290</text></g>
        <g class="cluster large"><circle cx="1166" cy="834" r="40"/><circle cx="1166" cy="834" r="30"/><text x="1166" y="842">232</text></g>
        <g class="cluster large"><circle cx="1288" cy="888" r="40"/><circle cx="1288" cy="888" r="30"/><text x="1288" y="896">266</text></g>
        <g class="cluster large"><circle cx="1264" cy="980" r="40"/><circle cx="1264" cy="980" r="30"/><text x="1264" y="988">210</text></g>
        <g class="cluster small"><circle cx="1324" cy="1028" r="40"/><circle cx="1324" cy="1028" r="30"/><text x="1324" y="1036">7</text></g>
      </svg>
      <div class="zoom">
        <button type="button" aria-label="Zoom in">+</button>
        <button type="button" aria-label="Zoom out">−</button>
      </div>
      <div class="summary">6829 crimes displayed</div>
      <div class="attribution"><a href="#leaflet">Leaflet</a> | © <a href="#osm">OpenStreetMap</a> © <a href="#cartodb">CartoDB</a></div>
    </div>
    <svg class="chart" viewBox="548 1054 1616 310" aria-label="Crimes per month">
      <path class="axis" d="M601 1094V1318H2154"/>
      <path class="area" d="M600 1156L744 1149 888 1146 1017 1159 1161 1167 1300 1180 1444 1185 1583 1166 1727 1157 1871 1155 2010 1114 2154 1117V1320H600Z"/>
      <svg x="600" y="1054" width="1554" height="270" viewBox="600 1054 1554 270">
        <path class="series" d="M600 1156L744 1149 888 1146 1017 1159 1161 1167 1300 1180 1444 1185 1583 1166 1727 1157 1871 1155 2010 1114 2154 1117"/>
        <g class="points">
          <circle cx="600" cy="1156" r="8"/><circle cx="744" cy="1149" r="8"/><circle cx="888" cy="1146" r="8"/><circle cx="1017" cy="1159" r="8"/><circle cx="1161" cy="1167" r="8"/><circle cx="1300" cy="1180" r="8"/><circle cx="1444" cy="1185" r="8"/><circle cx="1583" cy="1166" r="8"/><circle cx="1727" cy="1157" r="8"/><circle cx="1871" cy="1155" r="8"/><circle cx="2010" cy="1114" r="8"/><circle cx="2154" cy="1117" r="8"/>
        </g>
      </svg>
      <text class="legend" x="914" y="1133">Feb, 2015: <tspan>Crimes</tspan>: 613</text>
      <g class="ticks">
        <text class="end" x="593" y="1186">500</text>
        <text class="end" x="593" y="1328">0</text>
        <text x="595" y="1345">Dec 2014</text><text x="744" y="1345">Jan 2015</text><text x="888" y="1345">Feb 2015</text><text x="1017" y="1345">Mar 2015</text><text x="1161" y="1345">Apr 2015</text><text x="1300" y="1345">May 2015</text><text x="1444" y="1345">Jun 2015</text><text x="1583" y="1345">Jul 2015</text><text x="1727" y="1345">Aug 2015</text><text x="1871" y="1345">Sep 2015</text><text x="2010" y="1345">Oct 2015</text>
      </g>
    </svg>
  </section>
</main>
</body>
</html>
```
FILE: styles.css
```css
* { box-sizing: border-box; }

body {
  margin: 0;
  background: #fff;
  color: #545454;
  font: 26px/36px "Liberation Sans", Arial, sans-serif;
}

a { text-decoration: none; }

/* Navigation bar */
.navbar {
  display: flex;
  height: 96px;
  background: #f8f8f8;
  box-shadow: inset 0 -2px #e5e5e5;
}

.brand,
.nav-item {
  padding: 27px 34px 33px 30px;
  color: #777;
  font-size: 28px;
}

.brand {
  padding-right: 30px;
  padding-left: 14px;
  font-size: 36px;
}

.nav-item.active {
  background: #e7e7e7;
  color: #555;
}

.layout {
  display: flex;
  align-items: flex-start;
  gap: 24px;
  padding: 51px 8px 0 56px;
}

/* Sidebar */
.sidebar {
  flex: none;
  width: 468px;
  padding: 37px 36px 60px;
  border: 2px solid #e8e8e8;
  border-radius: 6px;
  color: #7b7b7b;
}

.sidebar h3 {
  margin: 0 0 18px;
  color: #777;
  font-size: 46px;
  font-weight: 400;
  line-height: 46px;
  -webkit-text-stroke: 1px currentColor;
}

.sidebar p { margin: 0 0 18px; }

.sidebar p a { color: #79a9d1; }

.sidebar hr {
  margin: 36px 0;
  border: 0;
  border-top: 2px solid #f0f0f0;
}

.field + .field { margin-top: 26px; }

.field label {
  display: block;
  margin: 0 0 8px;
  color: #8f8f8f;
  font-weight: 700;
}

.select-wrap { position: relative; }

.select-wrap::after {
  content: "";
  position: absolute;
  top: 25px;
  right: 33px;
  border: 9px solid transparent;
  border-top-color: #777;
  border-bottom: 0;
}

.field select {
  display: block;
  width: 100%;
  height: 62px;
  padding: 0 22px;
  appearance: none;
  background: #fff;
  border: 2px solid #ddd;
  border-radius: 6px;
  color: #7b7b7b;
  font: inherit;
}

/* Map */
.content {
  flex: 1;
  min-width: 0;
}

.content h4 {
  margin: 0;
  padding: 48px 30px 18px;
  font-size: 37px;
  font-weight: 400;
  line-height: 40px;
  -webkit-text-stroke: 1px currentColor;
}

.map {
  position: relative;
  overflow: hidden;
  aspect-ratio: 1616 / 800;
  background: #f4f4f3;
}

.basemap {
  display: block;
  width: 100%;
  height: 100%;
}

.tile { overflow: hidden; }

.tile path {
  fill: none;
  stroke-linejoin: round;
  vector-effect: non-scaling-stroke;
}

.tile .park { fill: #eaedea; }
.tile .water { fill: #cbd0d4; }
.tile .minor { stroke: #e8eaea; stroke-width: 2px; }
.tile .road { stroke: #dcdedf; stroke-width: 3px; }
.tile .river { stroke: #cbd0d4; stroke-width: 4px; }
.tile .mway-case { stroke: #d9dadb; stroke-width: 10px; }
.tile .mway { stroke: #fff; stroke-width: 6px; }

.places text {
  fill: #b5c0ca;
  stroke: #f4f4f3;
  stroke-width: 4px;
  paint-order: stroke;
  font: 600 22px "Open Sans", "Noto Sans", sans-serif;
}

.places .city {
  fill: #9dabb9;
  font-size: 30px;
}

.end { text-anchor: end; }

.boundary path {
  stroke: #000;
  stroke-width: 4px;
  stroke-linejoin: miter;
}

.boundary.outer { opacity: .36; }
.boundary.inner { opacity: .54; }

.crime {
  fill: none;
  stroke: #ff3a48;
  stroke-width: 6px;
}

.cluster text {
  fill: #3a302c;
  font-size: 24px;
  text-anchor: middle;
}

.cluster circle { fill-opacity: .6; }
.large circle { fill: #fd9c73; }
.large circle + circle { fill: #ec7e2b; }
.medium circle { fill: #f1d357; }
.medium circle + circle { fill: #e6bd28; }
.small circle { fill: #b5e28c; }
.small circle + circle { fill: #6ecc39; }

.zoom {
  position: absolute;
  top: 20px;
  left: 20px;
  display: flex;
  flex-direction: column;
  border-radius: 8px;
  box-shadow: 0 2px 9px rgba(0, 0, 0, .6);
}

.zoom button {
  width: 52px;
  height: 52px;
  padding: 0;
  background: #fff;
  border: 0;
  border-radius: 0 0 8px 8px;
  color: #000;
  font: 700 34px/54px "Liberation Sans", Arial, sans-serif;
}

.zoom button:first-child {
  border-bottom: 2px solid #ccc;
  border-radius: 8px 8px 0 0;
}

.summary {
  position: absolute;
  top: 28px;
  right: 57px;
  width: 394px;
  padding: 0 34px;
  background: rgba(255, 255, 255, .75);
  border: 2px solid #e3e3e3;
  border-radius: 8px;
  color: #f0616b;
  font-weight: 700;
}

.attribution {
  position: absolute;
  right: 0;
  bottom: 0;
  padding: 0 10px;
  background: rgba(255, 255, 255, .7);
  color: #333;
  font-size: 22px;
  line-height: 32px;
}

.attribution a { color: #1c7aa0; }

/* Time series */
.chart {
  display: block;
  width: 100%;
}

.axis {
  fill: none;
  stroke: #545454;
  stroke-width: 3px;
}

.area {
  fill: #f5001d;
  fill-opacity: .15;
}

.series {
  fill: none;
  stroke: #ed1320;
  stroke-width: 4px;
}

.points { fill: #ff0a1c; }

.legend {
  fill: #545454;
  font-size: 28px;
  font-weight: 700;
}

.legend tspan { fill: #f0101f; }

.ticks {
  fill: #545454;
  font-size: 22px;
  text-anchor: middle;
}

.ticks .end { text-anchor: end; }
```
